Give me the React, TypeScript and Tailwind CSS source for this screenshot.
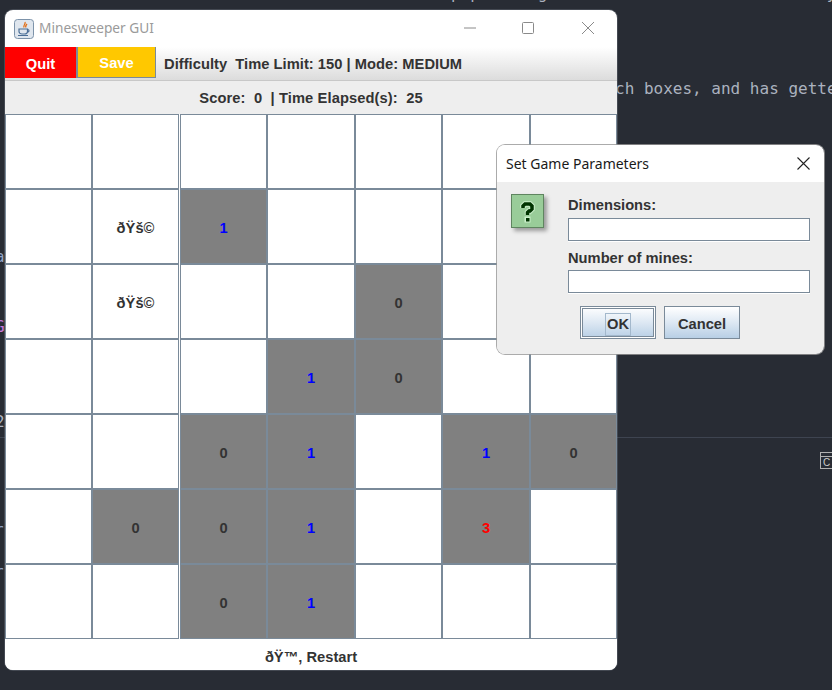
const FLAG = "\u00f0\u0178\u0161\u00a9";
const font = "font-['Liberation_Sans',Arial,sans-serif]";
const mono = "font-['DejaVu_Sans_Mono',monospace] text-base leading-5";

// v: cell text, o: opened (grey) cell
type Cell = { v?: string; o?: boolean };
const e: Cell = {};
const n = (v: string): Cell => ({ v, o: true });

const rows: Cell[][] = [
  [e, e, e, e, e, e, e],
  [e, { v: FLAG }, n("1"), e, e, e, e],
  [e, { v: FLAG }, e, e, n("0"), e, e],
  [e, e, e, n("1"), n("0"), e, e],
  [e, e, n("0"), n("1"), e, n("1"), n("0")],
  [e, n("0"), n("0"), n("1"), e, n("3"), e],
  [e, e, n("0"), n("1"), e, e, e],
];

const textColor = (v?: string) => {
  if (v === "1") return "text-[#0000ff]";
  if (v === "3") return "text-[#ff0000]";
  return "text-[#333333]";
};

const JavaIcon = () => (
  <svg width="20" height="20" viewBox="0 0 20 20">
    <rect x="0.5" y="0.5" width="19" height="19" rx="3" fill="#dfe6ee" stroke="#7d93aa" />
    <path d="M11 3c1 2-2 3-1 5.500 M13 5c-1 1-2 2-1 3.500" stroke="#e2701a" strokeWidth="1.300" fill="none" />
    <path d="M5 10h8.500v2.500c0 1.500-1.500 2.500-3 2.500h-2.500c-1.500 0-3-1-3-2.500z" fill="none" stroke="#4b6e96" strokeWidth="1.200" />
    <path d="M13.500 10.500c2 0 2 2.500 0 2.500 M4 16.500h10" fill="none" stroke="#4b6e96" strokeWidth="1.200" />
  </svg>
);

const QuestionIcon = () => (
  <div className="w-[33px] h-[34px] shadow-[3px_3px_4px_rgba(0,0,0,0.35)]">
    <svg width="33" height="34" viewBox="0 0 33 34">
      <rect x="0.500" y="0.500" width="32" height="33" fill="#99cc99" stroke="#5f8560" />
      <path d="M12 14v-2l2-2h5l2 2v3l-2 2h-1l-1.500 1.500v2.500" fill="none" stroke="#ccf0cc" strokeWidth="5.500" />
      <rect x="13.500" y="22.500" width="6" height="6" fill="#ccf0cc" />
      <path d="M12 14v-2l2-2h5l2 2v3l-2 2h-1l-1.500 1.500v2.500" fill="none" stroke="#003300" strokeWidth="3.500" />
      <rect x="15" y="24" width="3.500" height="3.500" fill="#003300" />
    </svg>
  </div>
);

const Field = () => (
  <div className="h-[23px] w-[242px] bg-white border border-[#7a8a99] shadow-[0_1px_0_#ffffff]" />
);

const DialogButton = ({ label, focused }: { label: string; focused?: boolean }) => (
  <div
    className={`w-[76px] h-[33px] pt-[3px] flex items-center justify-center text-[14.700px] font-bold text-[#333333] border border-[#7a8a99] bg-gradient-to-b from-white via-[#dde8f3] to-[#b8cfe5] ${
      focused ? "shadow-[inset_0_0_0_1px_#ffffff,inset_0_0_0_2px_#7a8a99]" : ""
    }`}
  >
    <span className={focused ? "border border-[#a3b8cc] px-[1px] leading-[21px]" : ""}>{label}</span>
  </div>
);

export default function App() {
  return (
    <div className={`relative w-[832px] h-[690px] overflow-hidden bg-[#282c34] ${font}`}>
      {/* editor text behind the windows */}
      <div className={`absolute left-[451px] top-[-16px] text-[#abb2bf] whitespace-pre ${mono}`}>
        pop then go to the menus and it will try
      </div>
      <div className={`absolute left-[615px] top-[79px] text-[#abb2bf] whitespace-nowrap ${mono}`}>
        ch boxes, and has getters
      </div>
      <div className={`absolute left-[-5px] top-[247px] text-[#8fa3c4] ${mono}`}>a</div>
      <div className={`absolute left-[-5px] top-[317px] text-[#c678dd] ${mono}`}>G</div>
      <div className={`absolute left-[-5px] top-[412px] text-[#abb2bf] ${mono}`}>2</div>
      <div className={`absolute left-[-6px] top-[520px] text-[#8fa3c4] ${mono}`}>r</div>
      <div className={`absolute left-[-6px] top-[562px] text-[#8fa3c4] ${mono}`}>r</div>
      <div className="absolute left-0 right-0 top-[437px] h-px bg-[#3e4450]" />
      <div className="absolute left-[820px] top-[452px] w-4 h-[17px] border border-[#b0b0b0]">
        <div className="mt-[3px] border-t border-[#b0b0b0] text-[10px] leading-[11px] text-[#cccccc] pl-[2px]">C</div>
      </div>

      {/* main game window */}
      <div className="absolute left-[5px] top-[10px] w-[612px] h-[660px] bg-white rounded-lg overflow-hidden flex flex-col shadow-[0_0_0_1px_rgba(120,130,140,0.35)]">
        <div className="h-[37px] shrink-0 flex items-center pl-[9px]">
          <JavaIcon />
          <span className="ml-[5px] font-['Noto_Sans',sans-serif] text-[13.700px] text-[#9a9a9a]">Minesweeper GUI</span>
          <div className="ml-auto flex items-center -mt-[2px]">
            <svg width="14" height="14" viewBox="0 0 14 14" className="mr-[44px]">
              <path d="M1 7h12" stroke="#8a8a8a" />
            </svg>
            <svg width="14" height="14" viewBox="0 0 14 14" className="mr-[46px]">
              <rect x="1.500" y="1.500" width="11" height="11" rx="1" fill="none" stroke="#8a8a8a" />
            </svg>
            <svg width="14" height="14" viewBox="0 0 14 14" className="mr-[22px]">
              <path d="M1 1l12 12M13 1L1 13" stroke="#8a8a8a" />
            </svg>
          </div>
        </div>

        <div className="h-[33px] shrink-0 flex items-start bg-gradient-to-b from-white to-[#dcdcdc] text-[14.700px] font-bold text-[#333333]">
          <div className="w-[73px] h-[31px] pt-[3px] bg-[#ff0000] text-white flex items-center justify-center border-r-2 border-[#7a8a99]">
            Quit
          </div>
          <div className="w-[78px] h-[31px] pt-[3px] bg-[#ffc800] text-white flex items-center justify-center border-r border-b border-[#7a8a99]">
            Save
          </div>
          <span className="ml-2 h-[31px] leading-[35px] tracking-[0.03px] whitespace-pre">Difficulty  Time Limit: 150 | Mode: MEDIUM</span>
        </div>

        <div className="h-[34px] shrink-0 pt-[2px] bg-[#eeeeee] border-t border-[#c8c8c8] flex items-center justify-center text-[14.700px] tracking-[0.1px] font-bold text-[#333333] whitespace-pre">
          Score:  0  | Time Elapsed(s):  25
        </div>

        <div className="grid grid-cols-[87px_88px_87px_88px_87px_88px_87px] grid-rows-[repeat(7,75px)] shrink-0 bg-white">
          {rows.flat().map((c, i) => (
            <div
              key={i}
              className={`flex items-center justify-center pt-[4px] text-[14.700px] font-bold border border-[#7a8a99] ${
                c.o ? "bg-[#808080]" : "bg-white"
              } ${i % 7 === 1 ? "mr-px" : ""} ${textColor(c.v)}`}
            >
              {c.v}
            </div>
          ))}
        </div>

        <div className="flex-1 flex items-center justify-center pt-[5px] text-[14.700px] font-bold text-[#333333] bg-white">
          {"\u00f0\u0178\u2122\u201a Restart"}
        </div>
      </div>

      {/* dialog */}
      <div className="absolute left-[497px] top-[145px] w-[327px] h-[209px] rounded-lg overflow-hidden flex flex-col shadow-[0_0_0_1px_rgba(150,150,150,0.8)]">
        <div className="h-[37px] shrink-0 bg-white flex items-center justify-between pl-[9px] pr-[14px]">
          <span className="font-['Noto_Sans',sans-serif] text-sm text-[#1a1a1a]">Set Game Parameters</span>
          <svg width="13" height="13" viewBox="0 0 13 13">
            <path d="M.5.5l12 12M12.500.5l-12 12" stroke="#222222" strokeWidth="1.100" />
          </svg>
        </div>
        <div className="flex-1 bg-[#eeeeee] flex flex-col">
          <div className="flex pl-[14px] pt-[12px]">
            <QuestionIcon />
            <div className="ml-[24px] flex flex-col text-[14.700px] font-bold text-[#333333]">
              <div className="h-[24px] pb-[2px] flex items-center">Dimensions:</div>
              <Field />
              <div className="h-[29px] flex items-center pt-[6px]">Number of mines:</div>
              <Field />
            </div>
          </div>
          <div className="flex gap-2 pl-[83px] mt-[13px]">
            <DialogButton label="OK" focused />
            <DialogButton label="Cancel" />
          </div>
        </div>
      </div>
    </div>
  );
}
